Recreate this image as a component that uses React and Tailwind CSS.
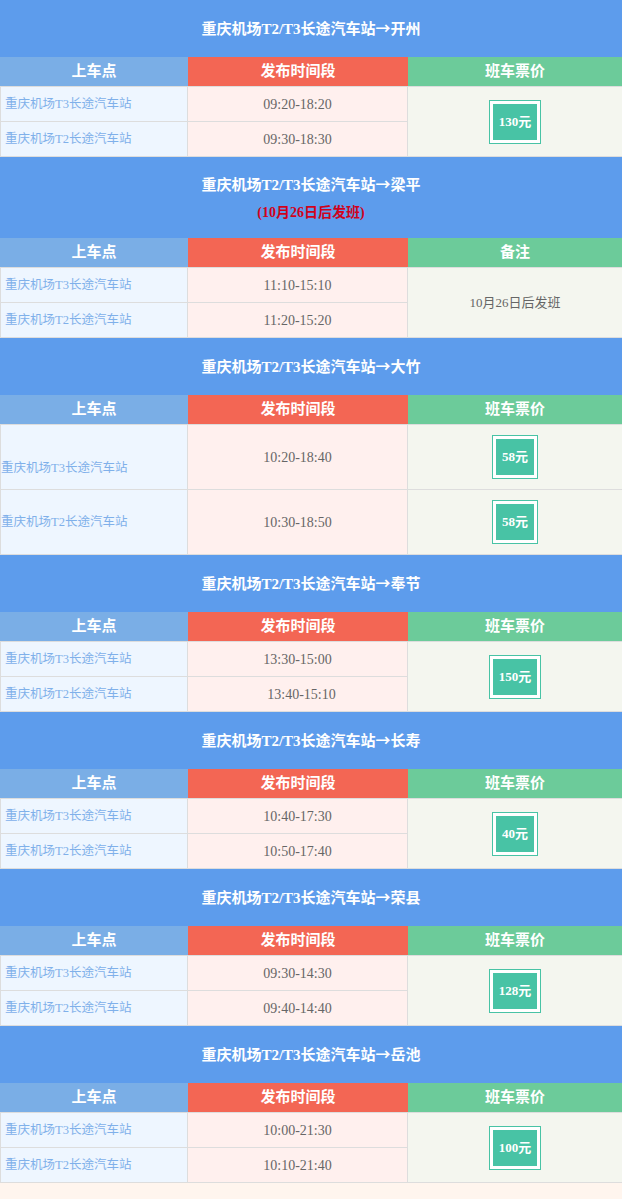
const font = { fontFamily: '"Liberation Serif", "Noto Sans CJK SC", serif' }

const routes = [
  { dest: '开州', price: '130元', times: ['09:20-18:20', '09:30-18:30'] },
  { dest: '梁平', note: '10月26日后发班', times: ['11:10-15:10', '11:20-15:20'] },
  { dest: '大竹', split: ['58元', '58元'], times: ['10:20-18:40', '10:30-18:50'] },
  { dest: '奉节', price: '150元', times: ['13:30-15:00', '13:40-15:10'], nudge: true },
  { dest: '长寿', price: '40元', times: ['10:40-17:30', '10:50-17:40'] },
  { dest: '荣县', price: '128元', times: ['09:30-14:30', '09:40-14:40'] },
  { dest: '岳池', price: '100元', times: ['10:00-21:30', '10:10-21:40'] },
]

const stations = ['重庆机场T3长途汽车站', '重庆机场T2长途汽车站']

function PriceBox({ price }) {
  return (
    <div className="border border-[#48c3a5] p-[3px] bg-white">
      <div className="bg-[#48c3a5] text-white font-bold text-[13px] px-[6px] h-[36px] flex items-center">
        {price}
      </div>
    </div>
  )
}

function Route({ r }) {
  const tall = !!r.split
  const rowH = tall ? 'h-[65px]' : 'h-[35px]'
  return (
    <section>
      <div className={`bg-[#5d9cec] flex flex-col items-center justify-center ${r.note ? 'h-[81px]' : 'h-[57px]'}`}>
        <p className="text-white font-bold text-[15px] leading-[27px]">
          重庆机场T2/T3长途汽车站<span style={{ fontFamily: '"Noto Sans CJK SC", sans-serif' }}>→</span>{r.dest}
        </p>
        {r.note && <p className="text-[#d0021b] font-bold text-[14px] leading-[27px]">({r.note})</p>}
      </div>

      <div className="grid grid-cols-[188px_220px_214px] text-white font-bold text-[15px] h-[29px]">
        <div className="bg-[#7aaee6] flex items-center justify-center">上车点</div>
        <div className="bg-[#f36654] flex items-center justify-center">发布时间段</div>
        <div className="bg-[#6ccb9a] flex items-center justify-center">{r.note ? '备注' : '班车票价'}</div>
      </div>

      <div className="grid grid-cols-[188px_220px_214px] border-t border-[#dddddd]">
        {stations.map((s, i) => (
          <div key={s} className="contents">
            <div
              className={`${rowH} bg-[#eef6ff] border-l border-r border-b border-[#dddddd] flex items-center text-[12.5px] text-[#7fb0ea] ${
                tall ? 'pl-0' : 'pl-[4px]'
              } ${tall && i === 0 ? 'pt-[22px]' : ''}`}
            >
              {s}
            </div>
            <div
              className={`${rowH} bg-[#fff0ee] border-r border-b border-[#dddddd] flex items-center justify-center text-[14px] text-[#666666] ${
                r.nudge && i === 1 ? 'pl-[8px]' : ''
              }`}
            >
              {r.times[i]}
            </div>
            {r.split && (
              <div className={`${rowH} bg-[#f4f6ef] border-b border-[#dddddd] flex items-center justify-center`}>
                <PriceBox price={r.split[i]} />
              </div>
            )}
            {!r.split && i === 0 && (
              <div className="row-span-2 bg-[#f4f6ef] border-b border-[#dddddd] flex items-center justify-center">
                {r.price ? <PriceBox price={r.price} /> : <span className="text-[13px] text-[#666666]">{r.note}</span>}
              </div>
            )}
          </div>
        ))}
      </div>
    </section>
  )
}

export default function App() {
  return (
    <div className="w-[622px] min-h-[1199px] bg-[#fff5ee]" style={font}>
      {routes.map(r => <Route key={r.dest} r={r} />)}
    </div>
  )
}
